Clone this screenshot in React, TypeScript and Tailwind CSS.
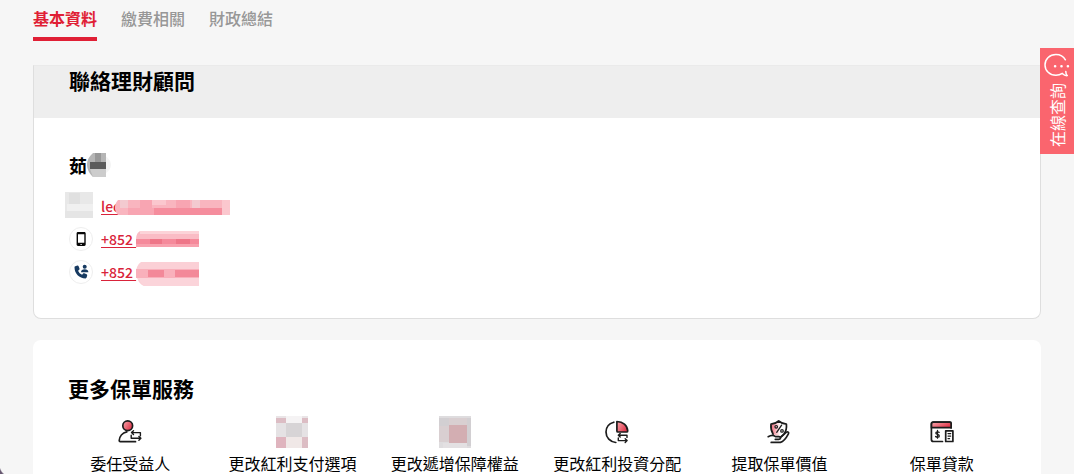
import { useState, type ReactNode } from "react";
import clsx from "clsx";

const TABS = ["基本資料", "繳費相關", "財政總結"];

interface MosaicProps {
  className: string;
  viewBox: string;
  children: ReactNode;
}

function Mosaic({ className, viewBox, children }: MosaicProps) {
  return (
    <svg
      className={clsx("shrink-0", className)}
      viewBox={viewBox}
      aria-hidden>
      {children}
    </svg>
  );
}

function IconGradient({ id }: { id: string }) {
  return (
    <linearGradient
      id={id}
      x1="0"
      y1="0"
      x2="1"
      y2="0.6">
      <stop
        offset="0"
        stopColor="#f8a9af"
      />
      <stop
        offset="1"
        stopColor="#e0364a"
      />
    </linearGradient>
  );
}

const ICON_PROPS = {
  className: "h-7 w-7",
  viewBox: "0 0 28 28",
  fill: "none",
  stroke: "#1c1c1c",
  strokeWidth: 1.7,
  strokeLinecap: "round" as const,
  strokeLinejoin: "round" as const,
  "aria-hidden": true,
};

function BeneficiaryIcon() {
  return (
    <svg {...ICON_PROPS}>
      <IconGradient id="beneficiary" />
      <circle cx="11.7" cy="7.8" r="4.9" fill="url(#beneficiary)" />
      <path d="M10.8 13.9C6.4 14.9 3.4 18.6 3.2 22.6c0 .7.4 1.1 1.1 1.1h15.2" />
      <path strokeWidth="1.4" d="M24.4 17.8v-3.2h-8.8M17.5 12.7l-2 1.9 2 1.9M15.2 17.2v3.1h9.5M22.9 18.4l2 1.9-2 1.9" />
    </svg>
  );
}

function AllocationIcon() {
  return (
    <svg {...ICON_PROPS}>
      <IconGradient id="allocation" />
      <path d="M10.8 4.2C6 5.5 3 9.2 3 14.1c0 5.6 4.1 9.8 9.8 10.4" />
      <path d="M13.9 3.5c6 .2 10.5 3.9 10.8 9.4 0 .7-.4 1.1-1 1.1h-8.8c-.7 0-1-.4-1-1z" fill="url(#allocation)" />
      <path strokeWidth="1.4" d="M24 19.4v-2.2h-8.7M17.2 15.4l-1.9 1.8 1.9 1.8M15.3 20v2.6h8.7M22.2 20.8l1.9 1.8-1.9 1.8" />
    </svg>
  );
}

function WithdrawIcon() {
  return (
    <svg {...ICON_PROPS}>
      <linearGradient id="withdraw">
        <stop offset="0" stopColor="#ef6676" />
        <stop offset="0.6" stopColor="#fff" />
      </linearGradient>
      <path d="M8.1 16.2C6.4 13.4 5.6 9.8 6 6.2 9 6.1 11.3 5 13.7 3c2.4 2 4.8 3.1 7.7 3.2.4 4-.3 7-2.2 9.6-1 1.3-2 2.2-3.2 2.9" fill="url(#withdraw)" />
      <path strokeWidth="1.3" d="m16.6 7.1-4.9 7.2" />
      <circle strokeWidth="1.2" cx="11.2" cy="8.8" r="1.3" />
      <circle strokeWidth="1.2" cx="17" cy="12.9" r="1.3" />
      <path d="M3.2 18.7c2.7-1.7 5.4-1.8 7.4 0h3.2c2.4 0 2.3 2.6 0 2.6h-3.5M15.6 19.4l5.8-5.2c1.3-1 2.9.1 2 1.6-2 3.8-4.4 7.6-8 8.6H6.2" />
    </svg>
  );
}

function LoanIcon() {
  return (
    <svg {...ICON_PROPS}>
      <IconGradient id="loan" />
      <path d="M14.5 23.5h-9c-1.3 0-2.1-.7-2.1-2V6.1c0-1.3.8-2 2.1-2h16.2c.9 0 1.4.6 1.4 1.4V10" />
      <path d="M3.5 9.7V6c0-1.2.8-1.9 2-1.9h16.2c.9 0 1.4.6 1.4 1.4v4.2z" fill="url(#loan)" />
      <path strokeWidth="1.3" d="M11.2 14.3c-.5-.6-3.3-.9-3.4.8 0 1.8 3.5.9 3.5 2.8 0 1.7-2.9 1.5-3.7.6M9.5 12.5v7.7" />
      <path d="M17.7 12.8h7.2v10.7h-7.2z" />
      <path strokeWidth="1.2" d="M20 15.6h2.7M20 18.1h2.7M20 20.6h1.6" />
    </svg>
  );
}

function BonusMosaic() {
  return (
    <Mosaic
      className="h-8 w-8"
      viewBox="0 0 32 32">
      <path fill="#e9e4e6" d="M0 0h32v32H0z" />
      <path fill="#f5f3f4" d="M10 0h16v7H10z" />
      <path fill="#d7d4d6" d="M10 7h16v14H10z" />
      <path fill="#e5e2e4" d="M0 7h10v14H0zM26 7h6v14h-6z" />
      <path fill="#dcbdc4" d="M0 2h10v5H0zM26 2h6v5h-6zM26 21h6v11h-6z" />
      <path fill="#dfb4be" d="M0 21h10v11H0z" />
      <path fill="#f0e8e7" d="M10 21h16v11H10z" />
    </Mosaic>
  );
}

function BenefitMosaic() {
  return (
    <Mosaic
      className="h-8 w-8"
      viewBox="0 0 32 32">
      <path fill="#dedcde" d="M0 0h32v32H0z" />
      <path fill="#d2cfd2" d="M0 2h10v8H0zM28 2h4v28h-4z" />
      <path fill="#d9cfd1" d="M10 2h18v7H10zM0 10h10v16H0z" />
      <path fill="#d3aeb2" d="M10 9h18v18H10z" />
      <path fill="#e3e0e2" d="M4 27h24v5H4z" />
    </Mosaic>
  );
}

const SERVICES = [
  { label: "委任受益人", icon: <BeneficiaryIcon /> },
  { label: "更改紅利支付選項", icon: <BonusMosaic /> },
  { label: "更改遞增保障權益", icon: <BenefitMosaic /> },
  { label: "更改紅利投資分配", icon: <AllocationIcon /> },
  { label: "提取保單價值", icon: <WithdrawIcon /> },
  { label: "保單貸款", icon: <LoanIcon /> },
];

function TabBar() {
  const [active, setActive] = useState(TABS[0]);

  return (
    <nav className="flex gap-6 pt-1.5">
      {TABS.map((tab) => (
        <button
          key={tab}
          type="button"
          onClick={() => setActive(tab)}
          className={clsx(
            "border-b-4 pb-[7px] text-base leading-6",
            tab === active ? "border-[#e01f35] font-bold text-[#e01f35]" : "border-transparent font-medium text-[#979797]",
          )}>
          {tab}
        </button>
      ))}
    </nav>
  );
}

function ContactIcon({ children }: { children: ReactNode }) {
  return (
    <span className="flex h-6 w-6 items-center justify-center rounded-full border border-[#eeeeee] bg-white">
      {children}
    </span>
  );
}

function AdvisorCard() {
  return (
    <section className="mt-6 overflow-hidden rounded-b-lg border border-[#dedede] border-t-[#eaeaea] bg-white">
      <h2 className="bg-[#eeeeee] px-[35px] pb-6 text-[21px] leading-7 font-bold">聯絡理財顧問</h2>
      <div className="px-[35px] pt-[35px] pb-[30px]">
        <div className="flex items-center text-lg leading-6 font-bold">
          茹
          <Mosaic
            className="h-6 w-6"
            viewBox="0 0 24 24">
            <path fill="#f5f5f5" d="M18 3c4 2 6 6 6 9s-2 6-6 9z" />
            <path fill="#b5b5b5" d="M6 0h13v24H6C1 19 0 15 0 11S2 4 6 0z" />
            <path fill="#989898" d="M8 0h6v9H8z" />
            <path fill="#5c5c5c" d="M3 9h16v7H3z" />
            <path fill="#cccccc" d="M3 16h16v8H6z" />
          </Mosaic>
        </div>
        <ul className="mt-3 text-sm leading-5 font-medium text-[#d9233a]">
          <li className="flex h-[33px] items-center gap-2">
            <Mosaic
              className="-ml-1 h-7 w-7"
              viewBox="0 0 28 28">
              <path fill="#e8e8e8" d="M0 0h28v26H0z" />
              <path fill="#e0e0e0" d="M4 1h11v11H4z" />
              <path fill="#f0f0f0" d="M2 12h26v7H2z" />
              <path fill="#e5e5e5" d="M0 19h28v7H0z" />
            </Mosaic>
            <a
              href="#email"
              className="flex items-center">
              <span className="underline decoration-1 underline-offset-2">lec</span>
              <Mosaic
                className="-ml-1.5 mt-1 h-4 w-[116px]"
                viewBox="0 0 116 16">
                <path fill="#f9b5bf" d="M4 0h112v15H4C0 11 0 4 4 0z" />
                <path fill="#f3cad0" d="M6 0h8v8H6zM78 0h8v8h-8z" />
                <path fill="#f8a5b2" d="M26 0h12v8H26zM62 0h14v8H62zM14 8h26v7H14z" />
                <path fill="#f58d9d" d="M40 8h68v7H40z" />
                <path fill="#fbc7ce" d="M38 0h14v5H38zM108 0h8v15h-8z" />
              </Mosaic>
            </a>
          </li>
          <li className="flex h-[33px] items-center gap-2">
            <ContactIcon>
              <svg
                className="h-4 w-4"
                viewBox="0 0 16 16"
                aria-hidden>
                <path fill="#080808" fillRule="evenodd" d="M5 1h6.3c.8 0 1.4.6 1.4 1.4v11.2c0 .8-.6 1.4-1.4 1.4H5c-.8 0-1.4-.6-1.4-1.4V2.4C3.6 1.6 4.2 1 5 1zm0 2.3v8.4h6.300V3.300zm2.300 9.600v.9H9v-.9z" />
              </svg>
            </ContactIcon>
            <a
              href="#mobile"
              className="flex items-center">
              <span className="whitespace-pre underline decoration-1 underline-offset-2">{"+852 "}</span>
              <Mosaic
                className="h-4 w-[63px]"
                viewBox="0 0 63 16">
                <path fill="#fabcc5" d="M4 0h59v16H0C1 11-2 4 4 0z" />
                <path fill="#fcd3d8" d="M4 0h59v3H4z" />
                <path fill="#f58a9b" d="M0 8h63v5H0z" />
                <path fill="#ee7688" d="M14 8h12v6H14zM40 8h14v5H40z" />
                <path fill="#f8a1ae" d="M0 13h63v3H0z" />
              </Mosaic>
            </a>
          </li>
          <li className="flex h-[33px] items-center gap-2">
            <ContactIcon>
              <svg
                className="h-4 w-4"
                viewBox="0 0 16 16"
                fill="#173a61"
                aria-hidden>
                <path d="M2.3 2.2 4.4 1.6c.6-.1 1 .1 1.2.6l.9 2.3c.2.5.1.9-.3 1.2L5.1 6.7c.8 1.8 2.1 3.2 4 4.1l1-1.2c.3-.4.8-.5 1.2-.3l2.3 1c.5.2.7.7.6 1.2l-.6 2.1c-.1.5-.5.8-1 .8C6.2 14.4 1.5 9.5 1.5 3.200c0-.5.3-.9.8-1z" />
                <circle cx="11.7" cy="2.7" r="2" />
                <path d="M8 8.2c0-2 1.5-3 3.7-3s3.7 1 3.7 3z" />
              </svg>
            </ContactIcon>
            <a
              href="#office"
              className="flex items-center">
              <span className="whitespace-pre underline decoration-1 underline-offset-2">{"+852 "}</span>
              <Mosaic
                className="mt-1 h-6 w-[63px]"
                viewBox="0 0 63 24">
                <path fill="#fbd0d6" d="M5 0h58v24H8C1 22-4 6 5 0z" />
                <path fill="#f9b0bb" d="M0 7h63v9H0z" />
                <path fill="#f38999" d="M12 8h16v7H12zM39 8h24v7H39z" />
                <path fill="#fbd4da" d="M1 16h62v8H8z" />
              </Mosaic>
            </a>
          </li>
        </ul>
      </div>
    </section>
  );
}

function ServicesCard() {
  return (
    <section className="mt-[21px] rounded-lg bg-white pt-8 pb-8">
      <h2 className="px-[35px] text-[21px] leading-8 font-bold">更多保單服務</h2>
      <div className="mt-3 grid grid-cols-6 pr-[18px] pl-4">
        {SERVICES.map(({ label, icon }) => (
          <button
            key={label}
            type="button"
            className="flex flex-col items-center gap-[3px] text-base leading-6 whitespace-nowrap">
            <span className="flex h-8 items-center">{icon}</span>
            {label}
          </button>
        ))}
      </div>
    </section>
  );
}

function EnquiryButton() {
  return (
    <button
      type="button"
      className="fixed top-12 right-0 flex w-[34px] flex-col items-center gap-[3px] bg-[#fa656e] pt-1 pb-[7px] text-white">
      <svg
        className="h-7 w-7"
        viewBox="0 0 28 28"
        fill="none"
        stroke="currentColor"
        strokeWidth="1.5"
        strokeLinecap="round"
        strokeLinejoin="round"
        aria-hidden>
        <path d="M22.4 7.8C20.5 4.3 17 2.4 12.9 2.4 6.7 2.4 2 7 2 12.9s4.7 10.4 10.9 10.4c2.4 0 4.6-.7 6.4-1.9 1.5 1.6 3 2.4 5 2.2-1-.8-1.5-2.1-1.5-4.1" />
        <path strokeWidth="2.6" d="M12.1 14.2h.01M18.5 14.2h.01M24.9 14.2h.01" />
      </svg>
      <span className="rotate-180 text-base leading-6 [text-orientation:sideways] [writing-mode:vertical-rl]">
        在線查詢
      </span>
    </button>
  );
}

export default function App() {
  return (
    <div className="relative h-screen overflow-hidden bg-[#f6f6f6] font-['Noto_Sans_CJK_TC',sans-serif] text-black">
      <main className="px-[33px]">
        <TabBar />
        <AdvisorCard />
        <ServicesCard />
      </main>
      <EnquiryButton />
      <span className="absolute bottom-0 left-0 h-3 w-2 bg-[radial-gradient(ellipse_at_top_right,transparent_75%,#665770_85%)]" />
    </div>
  );
}
